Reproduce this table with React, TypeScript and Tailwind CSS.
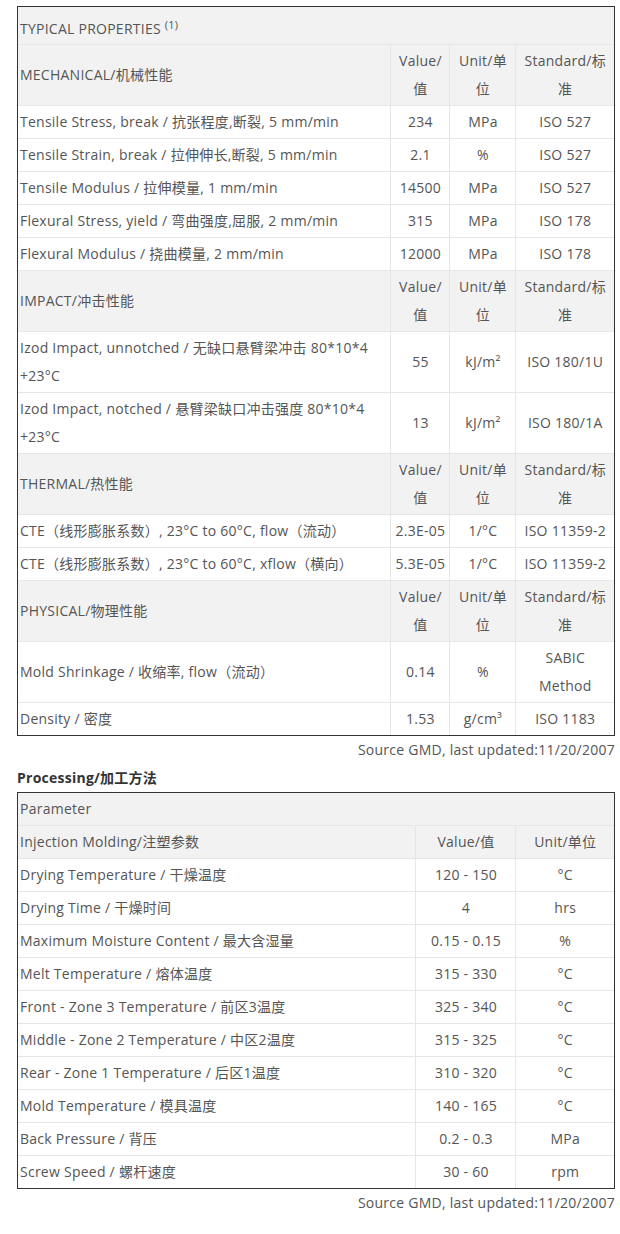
const FONT = "font-['Open_Sans','Noto_Sans_CJK_SC',sans-serif]";

type Row = { label: React.ReactNode; value: string; unit: React.ReactNode; std: React.ReactNode };
type Group = { title: string; rows: Row[] };

const GROUPS: Group[] = [
  {
    title: "MECHANICAL/机械性能",
    rows: [
      { label: "Tensile Stress, break / 抗张程度,断裂, 5 mm/min", value: "234", unit: "MPa", std: "ISO 527" },
      { label: "Tensile Strain, break / 拉伸伸长,断裂, 5 mm/min", value: "2.1", unit: "%", std: "ISO 527" },
      { label: "Tensile Modulus / 拉伸模量, 1 mm/min", value: "14500", unit: "MPa", std: "ISO 527" },
      { label: "Flexural Stress, yield / 弯曲强度,屈服, 2 mm/min", value: "315", unit: "MPa", std: "ISO 178" },
      { label: "Flexural Modulus / 挠曲模量, 2 mm/min", value: "12000", unit: "MPa", std: "ISO 178" },
    ],
  },
  {
    title: "IMPACT/冲击性能",
    rows: [
      {
        label: (
          <>
            Izod Impact, unnotched / 无缺口悬臂梁冲击 80*10*4
            <br />
            +23°C
          </>
        ),
        value: "55",
        unit: "kJ/m²",
        std: "ISO 180/1U",
      },
      {
        label: (
          <>
            Izod Impact, notched / 悬臂梁缺口冲击强度 80*10*4
            <br />
            +23°C
          </>
        ),
        value: "13",
        unit: "kJ/m²",
        std: "ISO 180/1A",
      },
    ],
  },
  {
    title: "THERMAL/热性能",
    rows: [
      { label: "CTE（线形膨胀系数）, 23°C to 60°C, flow（流动）", value: "2.3E-05", unit: "1/°C", std: "ISO 11359-2" },
      { label: "CTE（线形膨胀系数）, 23°C to 60°C, xflow（横向）", value: "5.3E-05", unit: "1/°C", std: "ISO 11359-2" },
    ],
  },
  {
    title: "PHYSICAL/物理性能",
    rows: [
      {
        label: "Mold Shrinkage / 收缩率, flow（流动）",
        value: "0.14",
        unit: "%",
        std: (
          <>
            SABIC
            <br />
            Method
          </>
        ),
      },
      { label: "Density / 密度", value: "1.53", unit: "g/cm³", std: "ISO 1183" },
    ],
  },
];

const PROCESSING = [
  ["Drying Temperature / 干燥温度", "120 - 150", "°C"],
  ["Drying Time / 干燥时间", "4", "hrs"],
  ["Maximum Moisture Content / 最大含湿量", "0.15 - 0.15", "%"],
  ["Melt Temperature / 熔体温度", "315 - 330", "°C"],
  ["Front - Zone 3 Temperature / 前区3温度", "325 - 340", "°C"],
  ["Middle - Zone 2 Temperature / 中区2温度", "315 - 325", "°C"],
  ["Rear - Zone 1 Temperature / 后区1温度", "310 - 320", "°C"],
  ["Mold Temperature / 模具温度", "140 - 165", "°C"],
  ["Back Pressure / 背压", "0.2 - 0.3", "MPa"],
  ["Screw Speed / 螺杆速度", "30 - 60", "rpm"],
];

const cell = "border-b border-r border-[#e6e6e6] last:border-r-0 px-[2px] py-[2px] leading-[28px] align-middle";
const label = `${cell} whitespace-nowrap`;
const mid = `${cell} text-center whitespace-nowrap`;

function Source() {
  return <p className="text-right leading-[28px] text-[#555]">Source GMD, last updated:11/20/2007</p>;
}

export default function App() {
  return (
    <div className={`${FONT} bg-white text-[14px] tracking-[0.25px] text-[#555] pl-[17px] pr-[5px] pb-4 min-h-[1234px]`}>
      <h3 className="-mt-[22px] leading-[28px] font-bold text-[#333]">Property/物理性能</h3>

      <div className="border border-[#333]">
        <table className="w-full table-fixed border-collapse [&_tr:last-child_td]:border-b-0">
          <colgroup>
            <col />
            <col className="w-[59px]" />
            <col className="w-[66px]" />
            <col className="w-[98px]" />
          </colgroup>
          <tbody>
            <tr className="bg-[#f2f2f2]">
              <td colSpan={4} className={`${label} pt-[8px] pb-[1px]`}>
                TYPICAL PROPERTIES <sup className="text-[11px]">(1)</sup>
              </td>
            </tr>
            {GROUPS.map((g) => (
              <>
                <tr key={g.title} className="bg-[#f2f2f2]">
                  <td className={label}>{g.title}</td>
                  <td className={mid}>
                    Value/
                    <br />值
                  </td>
                  <td className={mid}>
                    Unit/单
                    <br />位
                  </td>
                  <td className={mid}>
                    Standard/标
                    <br />准
                  </td>
                </tr>
                {g.rows.map((r, i) => (
                  <tr key={g.title + i}>
                    <td className={label}>{r.label}</td>
                    <td className={mid}>{r.value}</td>
                    <td className={mid}>{r.unit}</td>
                    <td className={mid}>{r.std}</td>
                  </tr>
                ))}
              </>
            ))}
          </tbody>
        </table>
      </div>
      <Source />

      <h3 className="leading-[28px] font-bold text-[#333]">Processing/加工方法</h3>
      <div className="border border-[#333]">
        <table className="w-full table-fixed border-collapse [&_tr:last-child_td]:border-b-0">
          <colgroup>
            <col />
            <col className="w-[100px]" />
            <col className="w-[98px]" />
          </colgroup>
          <tbody>
            <tr className="bg-[#f2f2f2]">
              <td colSpan={3} className={label}>
                Parameter
              </td>
            </tr>
            <tr className="bg-[#f2f2f2]">
              <td className={label}>Injection Molding/注塑参数</td>
              <td className={mid}>Value/值</td>
              <td className={mid}>Unit/单位</td>
            </tr>
            {PROCESSING.map(([name, value, unit]) => (
              <tr key={name}>
                <td className={label}>{name}</td>
                <td className={mid}>{value}</td>
                <td className={mid}>{unit}</td>
              </tr>
            ))}
          </tbody>
        </table>
      </div>
      <Source />
    </div>
  );
}
